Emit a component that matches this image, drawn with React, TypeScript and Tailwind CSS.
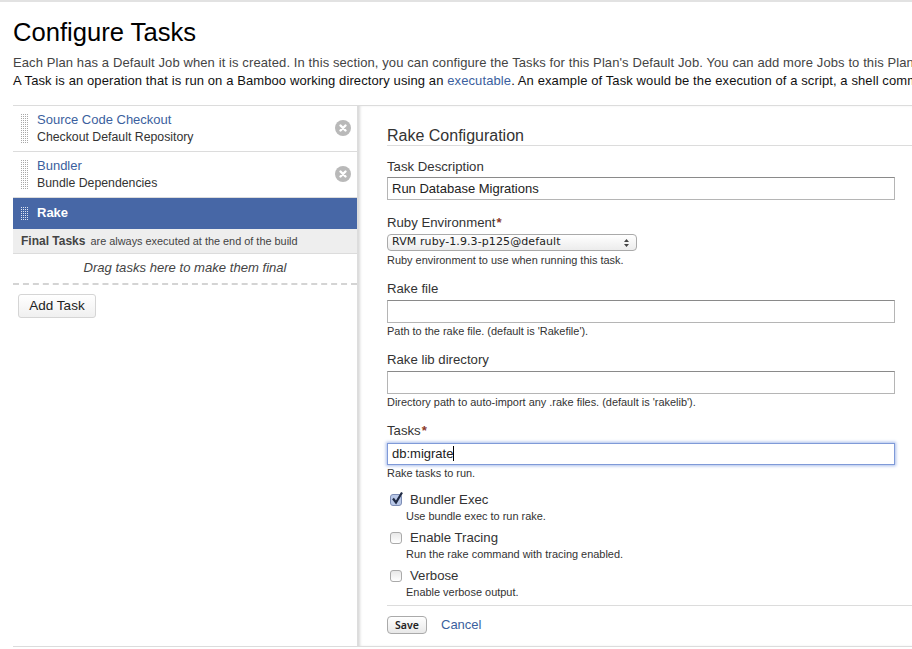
import React from "react";

const Grip = ({ light }: { light?: boolean }) => (
  <div className="grid grid-cols-[repeat(4,1px)] gap-x-px gap-y-px w-[8px] shrink-0">
    {Array.from({ length: light ? 28 : 60 }).map((_, i) => (
      <span key={i} className={`w-[1px] h-[1px] ${light ? "bg-[#dfe5f2]" : "bg-[#a8a8a8]"}`} />
    ))}
  </div>
);

const RemoveIcon = () => (
  <svg width="16" height="16" viewBox="0 0 16 16" className="shrink-0">
    <circle cx="8" cy="8" r="8" fill="#b9b9b9" />
    <path d="M5.5 5.5l5 5M10.5 5.5l-5 5" stroke="#fff" strokeWidth="2.4" strokeLinecap="round" />
  </svg>
);

const TaskRow = ({ title, sub }: { title: string; sub: string }) => (
  <div className="relative flex items-start h-[46px] border-b border-[#dcdcdc] pl-[8px] pt-[5px]">
    <div className="mt-[3px]">
      <Grip />
    </div>
    <div className="ml-[8px]">
      <div className="text-[13px] leading-[17px] text-[#3b5f9e]">{title}</div>
      <div className="text-[12.3px] leading-[18px] text-[#333]">{sub}</div>
    </div>
    <div className="absolute right-[6px] top-[14px]">
      <RemoveIcon />
    </div>
  </div>
);

const Label = ({ text, required }: { text: string; required?: boolean }) => (
  <div className="text-[13.2px] leading-[16px] text-[#333]">
    {text}
    {required && <span className="text-[#8c3a2a] font-bold ml-[1px]">*</span>}
  </div>
);

const Help = ({ text }: { text: string }) => (
  <div className="text-[10.95px] leading-[14px] text-[#333]">{text}</div>
);

const TextBox = ({ value }: { value?: string }) => (
  <div className="h-[23px] w-[508px] border border-[#b5b5b5] border-t-[#8a8a8a] bg-white px-[4px] text-[13px] leading-[21px] text-[#222]">
    {value}
  </div>
);

const CheckRow = ({ label, help, checked }: { label: string; help: string; checked?: boolean }) => (
  <div className="h-[38px]">
    <div className="flex items-center h-[20px] pl-[3px]">
      {checked ? (
        <span className="relative w-[12px] h-[12px] rounded-[3px] border border-[#7d8db5] bg-[#b9c8e8]">
          <svg width="15" height="15" viewBox="0 0 15 15" className="absolute left-[-1px] top-[-4px]">
            <path d="M3 7.5l3 4 6-10" fill="none" stroke="#1f2a44" strokeWidth="2.2" />
          </svg>
        </span>
      ) : (
        <span className="w-[12px] h-[12px] rounded-[3px] border border-[#aaa] bg-gradient-to-b from-[#e8e8e8] to-white" />
      )}
      <span className="ml-[8px] text-[13.2px] leading-[16px] text-[#333]">{label}</span>
    </div>
    <div className="pl-[19px] mt-[-1px]">
      <Help text={help} />
    </div>
  </div>
);

export default function App() {
  return (
    <div className="w-[912px] h-[649px] overflow-hidden bg-white border-t-2 border-[#e2e2e2] font-['Liberation_Sans',Arial,sans-serif]">
      <div className="pl-[13px]">
        <h1 className="pt-[15px] text-[25.6px] leading-[30px] text-black">Configure Tasks</h1>
        <div className="mt-[7px] whitespace-nowrap text-[13px] leading-[18px] tracking-[0.1px]">
          <div className="text-[#444]">
            Each Plan has a Default Job when it is created. In this section, you can configure the Tasks for this
            Plan's Default Job. You can add more Jobs to this Plan
          </div>
          <div className="text-[#111]">
            A Task is an operation that is run on a Bamboo working directory using an{" "}
            <span className="text-[#3b5f9e]">executable</span>. An example of Task would be the execution of a script,
            a shell command
          </div>
        </div>

        <div className="mt-[15px] flex h-[542px] border-t border-b border-[#dcdcdc]">
          <div className="w-[344px] shrink-0">
            <TaskRow title="Source Code Checkout" sub="Checkout Default Repository" />
            <TaskRow title="Bundler" sub="Bundle Dependencies" />
            <div className="flex items-center h-[31px] bg-[#4767a6] pl-[8px] pb-[1px]">
              <Grip light />
              <span className="ml-[8px] text-[13px] font-bold text-white">Rake</span>
            </div>
            <div className="flex items-center h-[25px] bg-[#eeeeee] border-b border-[#dcdcdc] pl-[8px] text-[10.9px] text-[#444]">
              <span className="font-bold text-[12px] mr-[5px]">Final Tasks</span>
              are always executed at the end of the build
            </div>
            <div className="h-[31px] border-b-2 border-dashed border-[#d4d4d4] text-center italic text-[13.1px] leading-[27px] text-[#444]">
              Drag tasks here to make them final
            </div>
            <button className="ml-[5px] mt-[9px] w-[78px] h-[24px] rounded-[3px] border border-[#d5d5d5] bg-gradient-to-b from-white to-[#f0f0f0] text-[13.5px] text-[#222]">
              Add Task
            </button>
          </div>

          <div className="flex-1 pl-[29px] border-l-[1px] border-[#ddd] shadow-[inset_3px_0_3px_-1px_#d8d8d8]">
            <div className="mt-[20px] w-[525px] border-b border-[#dcdcdc] text-[16px] leading-[19px] text-[#333]">
              Rake Configuration
            </div>

            <div className="mt-[13px]">
              <Label text="Task Description" />
            </div>
            <div className="mt-[2px]">
              <TextBox value="Run Database Migrations" />
            </div>

            <div className="mt-[15px]">
              <Label text="Ruby Environment" required />
            </div>
            <div className="mt-[3px] flex items-center justify-between h-[17px] w-[250px] rounded-[4px] border border-[#aaa] bg-gradient-to-b from-white to-[#ececec] pl-[4px] pr-[6px] text-[#222]">
              <span className="font-['DejaVu_Sans',sans-serif] text-[11px] tracking-[0.1px]">RVM ruby-1.9.3-p125@default</span>
              <svg width="7" height="10" viewBox="0 0 7 10">
                <path d="M3.5 1L6 4H1zM3.5 9L1 6h5z" fill="#444" />
              </svg>
            </div>
            <div className="mt-[2px]">
              <Help text="Ruby environment to use when running this task." />
            </div>

            <div className="mt-[14px]">
              <Label text="Rake file" />
            </div>
            <div className="mt-[3px]">
              <TextBox />
            </div>
            <div className="mt-[1px]">
              <Help text="Path to the rake file. (default is 'Rakefile')." />
            </div>

            <div className="mt-[14px]">
              <Label text="Rake lib directory" />
            </div>
            <div className="mt-[3px]">
              <TextBox />
            </div>
            <div className="mt-[1px]">
              <Help text="Directory path to auto-import any .rake files. (default is 'rakelib')." />
            </div>

            <div className="mt-[14px]">
              <Label text="Tasks" required />
            </div>
            <div className="mt-[4px] h-[22px] w-[508px] border border-[#7f9ad8] bg-white px-[4px] text-[13px] leading-[20px] text-[#222] shadow-[0_0_3px_1px_#a9bdea]">
              db:migrate
              <span className="inline-block w-px h-[15px] bg-black align-[-3px]" />
            </div>
            <div className="mt-[1px]">
              <Help text="Rake tasks to run." />
            </div>

            <div className="mt-[10px]">
              <CheckRow label="Bundler Exec" help="Use bundle exec to run rake." checked />
              <CheckRow label="Enable Tracing" help="Run the rake command with tracing enabled." />
              <CheckRow label="Verbose" help="Enable verbose output." />
            </div>

            <div className="mt-[1px] w-[525px] border-t border-[#dcdcdc] pt-[9px] flex items-center">
              <button className="w-[40px] h-[18px] rounded-[4px] border border-[#aaa] bg-gradient-to-b from-white to-[#e8e8e8] text-[10.5px] font-semibold leading-[16px] text-[#222] font-['Noto_Sans',sans-serif]">
                Save
              </button>
              <span className="ml-[14px] text-[13px] text-[#3b5f9e]">Cancel</span>
            </div>
          </div>
        </div>
      </div>
    </div>
  );
}
